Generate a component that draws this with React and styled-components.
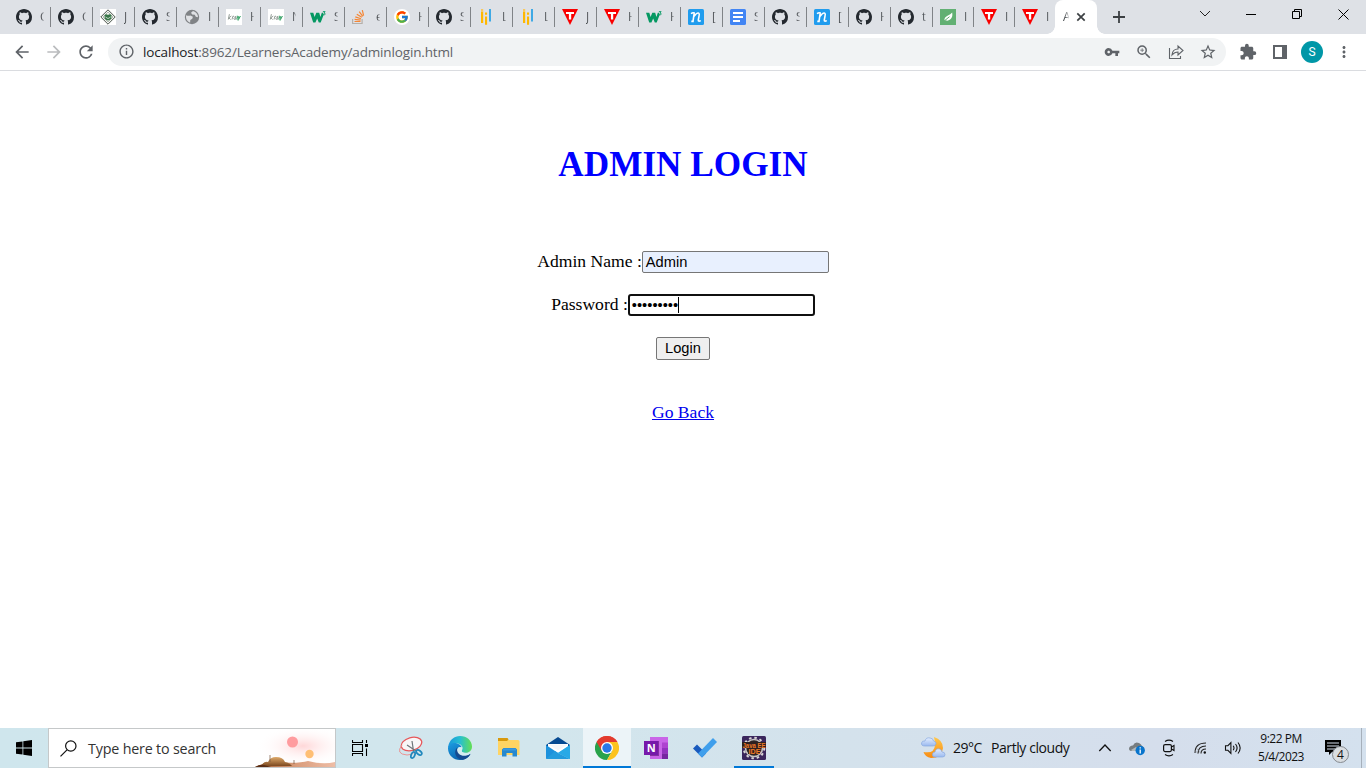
import React from "react";
import styled, { createGlobalStyle, css } from "styled-components";
import { FcGoogle } from "react-icons/fc";
import { MdVpnKey, MdStarBorder, MdExtension, MdInfoOutline, MdZoomIn, MdArrowBack, MdArrowForward, MdRefresh, MdMoreVert } from "react-icons/md";

const ui = `"Open Sans", "Noto Sans", sans-serif`;

const Global = createGlobalStyle`
  * { box-sizing: border-box; }
  html, body { margin: 0; padding: 0; overflow: hidden; }
  svg { display: block; flex: none; }
`;

const Screen = styled.div`
  width: 1366px;
  height: 768px;
  display: flex;
  flex-direction: column;
  background: #fff;
  overflow: hidden;
`;

/* ---------- Tab strip ---------- */
const TabStrip = styled.div`
  height: 34px;
  flex: none;
  display: flex;
  background: #dee1e6;
  padding-left: 9px;
`;

const Tab = styled.div`
  width: ${(p) => (p.$last ? 40 : p.$narrow ? 41 : 42)}px;
  padding: 9px 0 0 7px;
  display: flex;
  background: ${(p) => (p.$last ? "none" : "linear-gradient(#808387, #808387) right 7px / 1px 20px no-repeat")};
`;

const TabLabel = styled.span`
  width: 4px;
  margin-left: 8px;
  overflow: hidden;
  font: 12px/16px ${ui};
  color: #45494d;
  white-space: nowrap;
  mask-image: linear-gradient(90deg, #000 30%, rgba(0, 0, 0, 0.15));
`;

const ActiveTab = styled.div`
  width: 42px;
  height: 34px;
  display: flex;
  align-items: center;
  padding-left: 8px;
  background: #fff;
  border-radius: 8px 8px 0 0;
  position: relative;
  &::before, &::after {
    content: "";
    position: absolute;
    bottom: 0;
    width: 8px;
    height: 8px;
  }
  &::before { left: -8px; background: radial-gradient(circle at 0 0, transparent 7.5px, #fff 8px); }
  &::after { right: -8px; background: radial-gradient(circle at 100% 0, transparent 7.5px, #fff 8px); }
`;

const ActiveLabel = styled(TabLabel)`
  margin-left: 0;
  width: 6px;
`;

const CloseMark = styled.svg`
  margin-left: 7px;
`;

const NewTab = styled.div`
  width: 44px;
  display: flex;
  justify-content: center;
  align-items: center;
`;

const WindowControls = styled.div`
  margin-left: auto;
  display: flex;
  height: 28px;
`;

const WindowButton = styled.div`
  width: 46px;
  display: flex;
  align-items: center;
  justify-content: center;
`;

const Svg16 = ({ children, ...p }) => (
  <svg width="16" height="16" viewBox="0 0 16 16" {...p}>{children}</svg>
);

const icons = {
  github: () => (
    <Svg16>
      <path fill="#24292f" d="M8 0C3.58 0 0 3.58 0 8c0 3.54 2.29 6.53 5.47 7.59.4.07.55-.17.55-.38 0-.19-.01-.82-.01-1.49-2.01.37-2.53-.49-2.69-.94-.09-.23-.48-.94-.82-1.13-.28-.15-.68-.52-.01-.53.63-.01 1.08.58 1.23.82.72 1.21 1.87.87 2.33.66.07-.52.28-.87.51-1.07-1.78-.2-3.64-.89-3.64-3.95 0-.87.31-1.59.82-2.15-.08-.2-.36-1.02.08-2.12 0 0 .67-.21 2.2.82.64-.18 1.32-.27 2-.27s1.36.09 2 .27c1.53-1.04 2.2-.82 2.2-.82.44 1.1.16 1.92.08 2.12.51.56.82 1.27.82 2.15 0 3.07-1.87 3.75-3.65 3.95.29.25.54.73.54 1.48 0 1.07-.01 1.93-.01 2.2 0 .21.15.46.55.38A8.01 8.01 0 0 0 16 8c0-4.420-3.580-8-8-8z" />
    </Svg16>
  ),
  java: () => (
    <Svg16>
      <path fill="#fff" d="M0 0h16v16H0z" />
      <path d="M8 .8 15.2 8 8 15.2.8 8z" fill="#f2f5f1" stroke="#4d554e" />
      <path d="M8 3 13 8l-5 5-5-5z" fill="none" stroke="#a2aaa2" strokeWidth=".8" />
      <path d="M4.6 6q1.800-1.600 3.400 0 1.600-1.600 3.400 0v3.500q-1.800 2-3.400 2t-3.400-2z" fill="#397849" />
      <path d="M5.500 8 8 9.600l2.600-1.600" fill="none" stroke="#dce8dc" strokeWidth=".8" />
    </Svg16>
  ),
  globe: () => (
    <Svg16>
      <circle cx="8" cy="8" r="7.2" fill="#808386" />
      <path d="M2 6.200q2.500 1 4.300.2l2.600 1.300-.6 2-2 1.200-.2 2.800Q1.500 11.800 2 6.200M9 2.100l-2 1.600 1.200 1.800 2.600.3 1 2 2.200.5Q14 4 9 2.100" fill="#dfe1e4" />
    </Svg16>
  ),
  leafword: () => (
    <Svg16>
      <path fill="#fff" d="M0 0h16v16H0z" />
      <path d="M3.400 5.200 2.300 10.500M5.300 7 2.900 8.800l1.700 1.800M6 10.500l.9-3.300 1.100.1M8.500 8q2.100-1.300 1.600.3l-.6 2q-2 .3-1.600-.8t2-.8" fill="none" stroke="#89938d" strokeWidth=".9" />
      <path d="m10.800 7.200 1.300.1-1.400 2.900h1.400M12.300 7.200l.3 2.500 1.700-2.500-2.300 4.500" fill="none" stroke="#36a365" strokeWidth=".9" />
    </Svg16>
  ),
  w3: () => (
    <Svg16>
      <path d="M0 3.800h3.300l1.300 4.200 1.700-4.200h2.900l1.200 4.200 1.400-4.200h1.400l.4 2.200-2.900 7.500H8.800L7.200 9.400 5.400 13.500H3.200z" fill="#059862" />
      <path d="M12.900 2.600h2.200L14 4q1.300.1 1.200 1.100-.3 1.300-2.300.6" fill="none" stroke="#059862" strokeWidth=".9" />
    </Svg16>
  ),
  stack: () => (
    <Svg16>
      <path d="M.6 10v4.500h9.500V10" fill="none" stroke="#b5afa9" strokeWidth="1.200" />
      <path d="M2.500 12.500h6M2.600 10.400l6 .7M3.300 7.900l5.700 1.800M4.800 5.300l5 3M7.200 2.700l3.600 4.600M10.300 1.200l1.300 5.400" stroke="#f58634" strokeWidth="1.200" />
    </Svg16>
  ),
  google: () => (
    <Svg16>
      <circle cx="8" cy="8" r="8" fill="#fff" />
      <FcGoogle x="1" y="1" size="14" />
    </Svg16>
  ),
  bars: () => (
    <Svg16>
      <path d="M3 2.500h2.200V14H3zM7 7.500h2.100v8.300H7zM7 3.500h2.100v2.200H7z" fill="#ffb800" />
      <path d="M11 0h2v12.500h-2z" fill="#3fa9e5" /><path d="M3 0h2.200v2.500H3z" fill="#f9c95d" />
    </Svg16>
  ),
  tri: () => (
    <Svg16>
      <path d="M0 0h16L8 16z" fill="#f90000" />
      <path d="M4 3h8v2.100H9.200V10.600H6.900V5.100H4z" fill="#fff" />
    </Svg16>
  ),
  ninja: () => (
    <Svg16>
      <rect width="16" height="16" rx="1.500" fill="#209cee" />
      <path d="M3 4.600Q5 3.200 6.200 4L5 12.400M5.800 7.600Q9 3.200 10.700 4.100q1 .6.3 3l-.7 3.700q-.3 2.200 2.500.8M3.300 12.400h2.500" fill="none" stroke="#fff" strokeWidth="1.600" />
    </Svg16>
  ),
  docs: () => (
    <Svg16>
      <rect width="16" height="16" rx="1.500" fill="#4285f4" />
      <path d="M3 4h10M3 8h10M3 12h7" stroke="#fff" strokeWidth="1.800" />
    </Svg16>
  ),
  leaf: () => (
    <Svg16>
      <path fill="#62b073" d="M0 0h16v16H0z" />
      <path d="M4.500 11.400q-.5-3 3-4.700Q10.700 5.400 12.200 3.600q.8 4.900-2.100 7-2.500 1.700-4.400.6z" fill="#fff" />
      <path d="m3.500 12.500 6-4.800" stroke="#62b073" />
    </Svg16>
  ),
};

const tabs = [
  ["github", "C"], ["github", "C"], ["java", "J"], ["github", "S"], ["globe", "I"],
  ["leafword", "H"], ["leafword", "N"], ["w3", "S"], ["stack", "e"], ["google", "H"],
  ["github", "S"], ["bars", "L"], ["bars", "L"], ["tri", "J"], ["tri", "H"],
  ["w3", "H"], ["ninja", "["], ["docs", "S"], ["github", "S"], ["ninja", "["],
  ["github", "H"], ["github", "t"], ["leaf", "I"], ["tri", "I"], ["tri", "I"],
];

/* ---------- Toolbar ---------- */
const Toolbar = styled.div`
  height: 37px;
  flex: none;
  display: flex;
  align-items: center;
  padding: 0 12px 1px;
  border-bottom: 1px solid #dadce0;
  color: #5f6368;
`;

const NavButtons = styled.div`
  width: 96px;
  display: flex;
  gap: 12px;
`;

const AddressBar = styled.div`
  width: 1118px;
  height: 28px;
  display: flex;
  align-items: center;
  padding: 0 10px;
  border-radius: 14px;
  background: #f1f3f4;
`;

const Url = styled.span`
  margin-left: 8px;
  font: 13.5px/20px ${ui};
  letter-spacing: -0.15px;
  color: #5f6368;
  white-space: nowrap;
`;

const Host = styled.span`
  color: #202124;
`;

const AddressActions = styled.div`
  margin-left: auto;
  display: flex;
  align-items: center;
`;

const ActionSlot = styled.div`
  width: 32px;
  display: flex;
  justify-content: center;
  &:last-child { margin-right: -8px; }
`;

const ProfileTools = styled.div`
  display: flex;
  align-items: center;
  margin-left: 13px;
`;

const PanelIcon = styled.svg`
  margin-left: 16px;
`;

const Avatar = styled.div`
  width: 22px;
  height: 22px;
  margin: 0 12px 0 14px;
  border-radius: 50%;
  background: #0097a7;
  color: #fff;
  font: 12px/22px Roboto, sans-serif;
  text-align: center;
`;

/* ---------- Login page ---------- */
const Page = styled.main`
  height: 657px;
  flex: none;
  display: flex;
  flex-direction: column;
  align-items: center;
  padding-top: 74px;
  font: 17.6px/20px "Liberation Serif", serif;
  color: #000;
`;

const Title = styled.h1`
  margin: 0 0 66px;
  font-size: 35.2px;
  line-height: 40px;
  font-weight: bold;
  color: #00f;
`;

const FormRow = styled.div`
  height: 22px;
  margin-bottom: 21px;
  display: flex;
  align-items: center;
`;

const Label = styled.label`
  padding-bottom: 2px;
  white-space: pre;
`;

const Field = styled.div`
  width: 187px;
  height: 22px;
  display: flex;
  align-items: center;
  padding-left: ${(p) => (p.$focused ? 2 : 3)}px;
  border: ${(p) => (p.$focused ? "2px solid #101010" : "1px solid #767676")};
  border-radius: ${(p) => (p.$focused ? 3 : 2)}px;
  background: ${(p) => (p.$focused ? "#fff" : "#e8f0fe")};
  font: 14.67px/17px "Liberation Sans", sans-serif;
`;

const Caret = styled.i`
  width: 1px;
  height: 16px;
  background: #000;
`;

const LoginButton = styled.button`
  width: 54px;
  height: 23px;
  padding: 0;
  border: 1px solid #767676;
  border-radius: 2px;
  background: #efefef;
  color: #000;
  font: 14.67px/17px "Liberation Sans", sans-serif;
`;

const BackLink = styled.a`
  margin-top: 42px;
  color: #0000ee;
  text-decoration: underline;
`;

/* ---------- Taskbar ---------- */
const Taskbar = styled.div`
  height: 40px;
  flex: none;
  display: flex;
  background: linear-gradient(90deg, #cfe6ed 0%, #d2e6ed 40%, #d4e2ec 62%, #d5deec 85%, #d4e1ee 100%);
  color: #111;
`;

const TaskCell = styled.div`
  width: 48px;
  height: 40px;
  flex: none;
  display: flex;
  align-items: center;
  justify-content: center;
  background: ${(p) => (p.$active ? "#ecf4f8" : "transparent")};
  ${(p) => p.$line && css`
    background-image: linear-gradient(#0078d7, #0078d7);
    background-size: ${p.$line}px 2px;
    background-position: center bottom;
    background-repeat: no-repeat;
  `}
`;

const SearchBox = styled.div`
  width: 288px;
  height: 40px;
  flex: none;
  display: flex;
  align-items: center;
  padding-left: 11px;
  border: 1px solid #c5c8c9;
  background: #fff;
  font: 14.3px/20px ${ui};
  letter-spacing: -0.18px;
  color: #333;
  white-space: nowrap;
`;

const SearchText = styled.span`
  width: 178px;
  padding: 2px 0 0 11px;
`;

const Apps = styled.div`
  display: flex;
  gap: 1px;
  margin-left: 3px;
`;

const Weather = styled.div`
  width: 149px;
  margin-left: auto;
  display: flex;
  align-items: center;
  font: 14px/20px ${ui};
  white-space: nowrap;
`;

const Temperature = styled.span`
  width: 38px;
  margin-left: 7px;
  letter-spacing: -0.5px;
`;

const Condition = styled.span`
  letter-spacing: -0.42px;
`;

const Tray = styled.div`
  display: flex;
  align-items: center;
  margin-left: 19px;
`;

const TrayCell = styled.div`
  width: 32px;
  display: flex;
  justify-content: center;
`;

const Clock = styled.div`
  width: 64px;
  display: flex;
  flex-direction: column;
  align-items: center;
  font: 12px/18px ${ui};
  letter-spacing: -0.5px;
  padding-bottom: 1px;
  white-space: nowrap;
`;

const Notifications = styled.div`
  width: 37px;
  margin-left: 11px;
  height: 40px;
  padding: 11px 0 0;
  position: relative;
`;

const Count = styled.span`
  position: absolute;
  left: 8px;
  top: 18px;
  width: 17px;
  height: 17px;
  border: 1px solid #858a90;
  border-radius: 50%;
  background: #d9dde1;
  font: 12px/15px ${ui};
  text-align: center;
`;

const DesktopEdge = styled.div`
  width: 5px;
  border-left: 1px solid #a6b0bb;
`;

const SearchArt = () => (
  <svg width="80" height="38" viewBox="0 0 80 38">
    <defs>
      <radialGradient id="glow"><stop stopColor="#ffd7d8" /><stop offset="1" stopColor="#fff" stopOpacity="0" /></radialGradient>
      <linearGradient id="dune" x2="0" y2="1"><stop stopColor="#dfaa6b" /><stop offset="1" stopColor="#7d4a20" /></linearGradient>
      <linearGradient id="sand"><stop stopColor="#9b592b" /><stop offset=".5" stopColor="#d99b79" /><stop offset="1" stopColor="#eebda6" /></linearGradient>
    </defs>
    <ellipse cx="48" cy="17" rx="47" ry="20" fill="url(#glow)" />
    <circle cx="37.500" cy="13" r="5.500" fill="#ff9c9f" /><circle cx="54.500" cy="25" r="4.200" fill="#ffbf75" />
    <path d="M0 38q8-4 19-5 24 2 34-1 15 4 27 1v5z" fill="url(#sand)" />
    <path d="M6 37q3-5 7-4 2-5 8-5 7 0 9 5 5 1 7 4z" fill="url(#dune)" />
    <path d="M15 26v7M39 31v4" stroke="#75553e" strokeWidth=".7" />
    <path d="M0 38q5-3 9-2l7 2z" fill="#5b2e15" />
  </svg>
);

const SnipIcon = () => (
  <svg width="26" height="24" viewBox="0 0 26 24">
    <ellipse cx="13.500" cy="8" rx="10.500" ry="6.500" transform="rotate(-16 13.500 8)" fill="#f8f6f7" stroke="#e6575a" strokeWidth="1.300" />
    <path d="M4 9q-7 9 5 10 5 0 8-3" fill="none" stroke="#e99595" strokeWidth="1" />
    <path d="m14 5 1.500 10M9 9l9 6" stroke="#6d7479" strokeWidth="1.200" />
    <ellipse cx="15" cy="19" rx="1.800" ry="3.300" transform="rotate(22 15 19)" fill="none" stroke="#2188bd" strokeWidth="1.700" />
    <ellipse cx="21" cy="16.500" rx="1.900" ry="3.200" transform="rotate(-52 21 16.500)" fill="none" stroke="#2188bd" strokeWidth="1.700" />
  </svg>
);

const EdgeIcon = () => (
  <svg width="24" height="24" viewBox="0 0 24 24">
    <defs>
      <linearGradient id="eTop"><stop stopColor="#1995dc" /><stop offset=".5" stopColor="#27bfd0" /><stop offset="1" stopColor="#64df53" /></linearGradient>
      <linearGradient id="eLow" x2=".7" y2="1"><stop stopColor="#1d9de2" /><stop offset="1" stopColor="#075ba8" /></linearGradient>
    </defs>
    <path d="M.2 10.500C1.500 3.500 6.500 0 12 0c7 0 12 4.800 12 10.500 0 4-3 6.300-6.400 6.300-3.200 0-4.500-1.300-3.600-2.600 2-2.600-.8-6.200-4.700-6.600C5.200 7.200 1.500 8.800.2 12z" fill="url(#eTop)" />
    <path d="M0 12C.4 8.500 4.500 6.200 8.500 7.200c2.800.7 4.500 2.200 5.200 4-3.400-.4-5.500 2.300-4.600 5 1.200 3.700 6.200 5.300 13 2.200C20 22 16.200 24 12 24 5.400 24-.2 18.800 0 12z" fill="url(#eLow)" />
    <path d="M9.200 11.500c-4 4-2 11 5 12.300 3.200-.4 6.300-2.300 8.100-5.300.3-.7-.2-.8-.7-.6-6.200 3-12.700-.5-12.400-6.400z" fill="#154b91" />
    <path d="M14 11.500q-4-1.500-4.800 2c-.4 4 4.200 7.300 9.300 6q2.800-.6 3.700-1.900.6-1-.6-.9c-3.400 1-8.200.4-7.900-2z" fill="#d5edf1" />
  </svg>
);

const FolderIcon = () => (
  <svg width="22" height="20" viewBox="0 0 22 20">
    <path d="M0 1q0-1 1-1h8l1.500 2H20q1.500 0 1.500 1.500V17H0z" fill="#ffd463" />
    <path d="M0 0h9.500l1 1.500L9 3H0z" fill="#d8990d" />
    <path d="M4 18.500v-7L5.500 10h12l1.500 1.500v7h-4.500V15H8.500v3.500z" fill="#2689cf" /><path d="M5 10.500h13v2H5z" fill="#3a99df" />
  </svg>
);

const MailIcon = () => (
  <svg width="24" height="24" viewBox="0 0 24 24">
    <path d="M0 9 12 1l12 8v4H0z" fill="#064a91" /><path d="M2 8h20v9H2z" fill="#fff" />
    <path d="m0 9 12 8L0 23z" fill="#1c91dc" /><path d="m24 9-12 8 12 6z" fill="#35baf1" />
    <path d="M0 23 9 15l3 2 12 6z" fill="#229bdd" /><path d="m12 17 12-8v14z" fill="#28a9e6" />
    <path d="m2 8.500 10 5.800 10-5.800z" fill="#f5f7f9" />
  </svg>
);

const ChromeIcon = () => (
  <svg width="24" height="24" viewBox="0 0 24 24">
    <path d="M1.600 6A12 12 0 0 1 22.400 6L12 12z" fill="#e33b2e" />
    <path d="M1.600 6A12 12 0 0 0 12 24L17.200 15 12 12z" fill="#2aa34b" />
    <path d="M22.400 6A12 12 0 0 1 12 24l5.200-9L12 6z" fill="#fcc31e" />
    <path d="M1.600 6 6.800 15 12 12V6h10.400A12 12 0 0 0 1.600 6" fill="#e33b2e" />
    <circle cx="12" cy="12" r="6" fill="#fff" /><circle cx="12" cy="12" r="4.700" fill="#2878e7" />
  </svg>
);

const OneLetter = styled.text`
  font: bold 11px "Open Sans", sans-serif;
  fill: #fff;
`;

const OneNoteIcon = () => (
  <svg width="24" height="22" viewBox="0 0 24 22">
    <path d="M6 0h18v22H6z" fill="#c965e8" /><path d="M18 5.500h6V11h-6z" fill="#ae43d0" /><path d="M18 11h6v5.500h-6z" fill="#9332bf" /><path d="M18 16.500h6V22h-6z" fill="#7626a0" />
    <path d="M6 4h9v15H6z" fill="#5f167a" opacity=".65" /><path d="M0 4h14v14H0z" fill="#7719aa" />
    <OneLetter x="2.700" y="15">N</OneLetter>
  </svg>
);

const TodoIcon = () => (
  <svg width="24" height="20" viewBox="0 0 24 20">
    <path d="M0 10.500 4 6.500l9 9-4 4z" fill="#195abd" /><path d="m20 0 4 4L9 19.500l-4-4z" fill="#3f9fec" />
  </svg>
);

const IdeLetters = styled.text`
  font: bold 8px "Liberation Sans", sans-serif;
  fill: #ef7a28;
`;

const IdeIcon = () => (
  <svg width="24" height="24" viewBox="0 0 24 24">
    <rect width="24" height="24" rx="1.500" fill="#3a265c" />
    <circle cx="12" cy="12" r="10.300" fill="none" stroke="#d8d5d5" strokeWidth="2" strokeDasharray="2.500 2.893" />
    <circle cx="12" cy="12" r="8.500" fill="#2b2325" stroke="#c6c3c2" strokeWidth="1.600" />
    <path d="M0 6h24v6H0zM6 12h12v6H6z" fill="#2d2020" />
    <IdeLetters x=".5" y="11.700" textLength="23" lengthAdjust="spacingAndGlyphs">Java EE</IdeLetters>
    <IdeLetters x="6.500" y="18" textLength="12" lengthAdjust="spacingAndGlyphs">IDE</IdeLetters>
  </svg>
);

const WeatherIcon = () => (
  <svg width="25" height="24" viewBox="0 0 25 24">
    <defs><linearGradient id="moon" x2="0" y2="1"><stop stopColor="#ffc84d" /><stop offset="1" stopColor="#f78b13" /></linearGradient>
      <linearGradient id="cl" x2="0" y2="1"><stop stopColor="#e3eeff" /><stop offset="1" stopColor="#9ab9ef" /></linearGradient></defs>
    <path d="M13 1q9 3 9 11-1 10-12 10-6-1-7.500-6 11 2 11.500-7 0-4-1-8z" fill="url(#moon)" />
    <path d="M4 10q-4 0-3.500-3Q1 4.500 4 5q1-4 5-3 3 0 3.500 3 3 .5 2.500 3-.5 2-3 2z" fill="url(#cl)" stroke="#88a9df" strokeWidth=".7" />
    <path d="M14 21q-3 0-2.500-3 .5-2 2.500-2 1-4 4.500-3 2 .5 2.500 3 3 0 3 2.500t-2.500 2.500z" fill="url(#cl)" stroke="#88a9df" strokeWidth=".7" />
  </svg>
);

const TrayIcons = () => (
  <>
    <TrayCell><svg width="14" height="14" viewBox="0 0 14 14"><path d="m1.300 10 5.700-6 5.700 6" fill="none" stroke="#111" strokeWidth="1.300" /></svg></TrayCell>
    <TrayCell><svg width="18" height="16" viewBox="0 0 18 16"><path d="M3 11Q0 10 1.500 7 3 5 5 5.500 7 1 11 3q2 1 3 3 3 1 2 4v1z" fill="#777d80" /><path d="m3 10 5-3 7 4H4z" fill="#b2b8bb" /><circle cx="12.200" cy="10.500" r="4.700" fill="#0874cc" /><path d="M12.200 9.500v4M12.200 7.300v1.300" stroke="#fff" strokeWidth="1.300" /></svg></TrayCell>
    <TrayCell><svg width="14" height="18" viewBox="0 0 14 18"><rect x="1.600" y="5.600" width="7.800" height="7" rx="1.500" fill="none" stroke="#111" strokeWidth="1.200" /><path d="m9.500 8 2.500-1.500v5L9.500 10M3 2.500Q7-.2 11 2.500M3 15.500q4 2.700 8 0" fill="none" stroke="#111" strokeWidth="1.100" /></svg></TrayCell>
    <TrayCell><svg width="14" height="14" viewBox="0 0 14 14"><path d="M1 12Q1 2 12 2M4 12.500Q4 5 12 5M7 12.500Q7 8 12 8" fill="none" stroke="#222" strokeWidth="1.050" /><path d="M.8 9 4 12.700M1.500 6l5 6" stroke="#888" strokeWidth=".5" /><circle cx="10.800" cy="11.500" r="1.200" fill="#111" /></svg></TrayCell>
    <TrayCell><svg width="18" height="16" viewBox="0 0 18 16"><path d="M1.500 5.700h2.400l3-3v10.600l-3-3H1.500z" fill="none" stroke="#111" strokeWidth="1.100" /><path d="M9.200 5.800q1.600 2.200 0 4.400M11.500 4q3.200 4 0 8M14 2.500q4.300 5.500 0 11" fill="none" stroke="#111" strokeWidth="1.100" /></svg></TrayCell>
  </>
);

export default function App() {
  return (
    <Screen>
      <Global />
      <TabStrip>
        {tabs.map(([icon, label], i) => {
          const Icon = icons[icon];
          return (
            <Tab key={i} $narrow={i >= 22} $last={i === 24}>
              <Icon />
              <TabLabel>{label}</TabLabel>
            </Tab>
          );
        })}
        <ActiveTab>
          <ActiveLabel>A</ActiveLabel>
          <CloseMark width="10" height="10" viewBox="0 0 10 10"><path d="m1.300 1.300 7.400 7.400M8.700 1.300 1.300 8.700" stroke="#3c4043" strokeWidth="1.700" /></CloseMark>
        </ActiveTab>
        <NewTab><svg width="12" height="12" viewBox="0 0 12 12"><path d="M6 0v12M0 6h12" stroke="#3c4043" strokeWidth="1.800" /></svg></NewTab>
        <WindowControls>
          <WindowButton><svg width="12" height="8" viewBox="0 0 12 8"><path d="m1 1 5 5 5-5" fill="none" stroke="#222" /></svg></WindowButton>
          <WindowButton><svg width="10" height="10" viewBox="0 0 10 10"><path d="M0 5.500h10" stroke="#000" /></svg></WindowButton>
          <WindowButton><svg width="10" height="10" viewBox="0 0 10 10"><path d="M.5 2.500h7v7h-7zM2.500 2.500v-2h7v7h-2" fill="none" stroke="#000" /></svg></WindowButton>
          <WindowButton><svg width="11" height="11" viewBox="0 0 11 11"><path d="m.5.5 10 10M10.500.5l-10 10" stroke="#000" /></svg></WindowButton>
        </WindowControls>
      </TabStrip>

      <Toolbar>
        <NavButtons>
          <MdArrowBack size={20} />
          <MdArrowForward size={20} color="#babcbe" />
          <MdRefresh size={20} />
        </NavButtons>
        <AddressBar>
          <MdInfoOutline size={17} />
          <Url><Host>localhost</Host>:8962/LearnersAcademy/adminlogin.html</Url>
          <AddressActions>
            <ActionSlot><MdVpnKey size={16} /></ActionSlot>
            <ActionSlot><MdZoomIn size={18} /></ActionSlot>
            <ActionSlot><svg width="16" height="16" viewBox="0 0 16 16"><path d="M1.500 4v10.500h11V12M4 11q.5-6 6-6V2l5 4.500-5 4.500V8Q6.500 8 4 11z" fill="none" stroke="#5f6368" strokeWidth="1.100" /></svg></ActionSlot>
            <ActionSlot><MdStarBorder size={18} /></ActionSlot>
          </AddressActions>
        </AddressBar>
        <ProfileTools>
          <MdExtension size={18} />
          <PanelIcon width="14" height="14" viewBox="0 0 14 14"><path d="M0 0h14v14H0zM2 2v10h7V2z" fill="#5f6368" fillRule="evenodd" /></PanelIcon>
          <Avatar>S</Avatar>
          <MdMoreVert size={18} />
        </ProfileTools>
      </Toolbar>

      <Page>
        <Title>ADMIN LOGIN</Title>
        <FormRow><Label>Admin Name :</Label><Field>Admin</Field></FormRow>
        <FormRow><Label>Password :</Label><Field $focused>•••••••••<Caret /></Field></FormRow>
        <LoginButton>Login</LoginButton>
        <BackLink>Go Back</BackLink>
      </Page>

      <Taskbar>
        <TaskCell>
          <svg width="16" height="16" viewBox="0 0 16 16"><path d="m0 2.300 6.500-.9v6.200H0zM7.300 1.300 16 0v7.600H7.300zM0 8.400h6.500v6.200L0 13.700zM7.300 8.400H16V16l-8.700-1.300z" fill="#000" /></svg>
        </TaskCell>
        <SearchBox>
          <svg width="17" height="17" viewBox="0 0 17 17"><circle cx="10.800" cy="6" r="5.200" fill="none" stroke="#111" strokeWidth="1.200" /><path d="M7 9.800.5 16.300" stroke="#111" strokeWidth="1.200" /></svg>
          <SearchText>Type here to search</SearchText>
          <SearchArt />
        </SearchBox>
        <TaskCell>
          <svg width="16" height="16" viewBox="0 0 16 16"><path d="M.5 4.500h10v7H.5zM.5 0v2.500h10V0M.5 16v-2.500h10V16M14.500 0v3M14.500 8.500V16" fill="none" stroke="#000" strokeWidth="1.100" /><path d="M13 4h3v3h-3z" /></svg>
        </TaskCell>
        <Apps>
          <TaskCell><SnipIcon /></TaskCell>
          <TaskCell><EdgeIcon /></TaskCell>
          <TaskCell><FolderIcon /></TaskCell>
          <TaskCell><MailIcon /></TaskCell>
          <TaskCell $active $line={48}><ChromeIcon /></TaskCell>
          <TaskCell><OneNoteIcon /></TaskCell>
          <TaskCell><TodoIcon /></TaskCell>
          <TaskCell $line={40}><IdeIcon /></TaskCell>
        </Apps>
        <Weather>
          <WeatherIcon />
          <Temperature>29°C</Temperature>
          <Condition>Partly cloudy</Condition>
        </Weather>
        <Tray>
          <TrayIcons />
          <Clock><span>9:22 PM</span><span>5/4/2023</span></Clock>
          <Notifications>
            <svg width="17" height="17" viewBox="0 0 17 17"><path d="M1 1h16v12H8l-3 3v-3H1z" fill="#000" /><path d="M3 4h12M3 7h12M3 10h8" stroke="#d5deec" strokeWidth="1" /></svg>
            <Count>4</Count>
          </Notifications>
        </Tray>
        <DesktopEdge />
      </Taskbar>
    </Screen>
  );
}
